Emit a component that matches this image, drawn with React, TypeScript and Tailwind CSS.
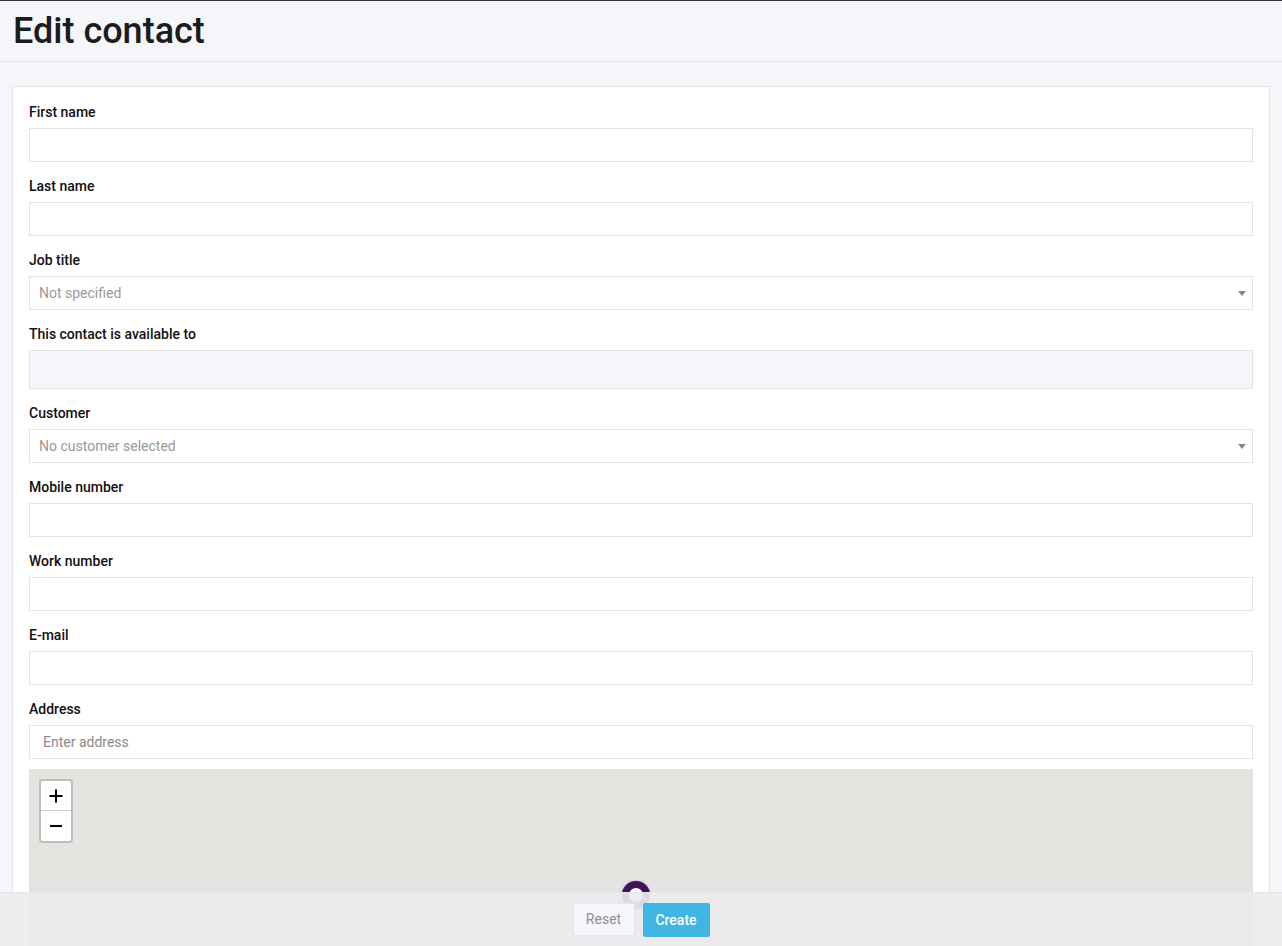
import React from "react";

function Label({ children }: { children: React.ReactNode }) {
  return <div className="mb-[7px] h-[18px] text-[14px] leading-[18px] font-medium text-[#111111]">{children}</div>;
}

function TextField({ label }: { label: string }) {
  return (
    <div className="mb-[15px]">
      <Label>{label}</Label>
      <input type="text" className="block h-[34px] w-full border border-[#e3e3e3] bg-white outline-none" />
    </div>
  );
}

function SelectField({ label, value }: { label: string; value: string }) {
  return (
    <div className="mb-[15px]">
      <Label>{label}</Label>
      <div className="flex h-[34px] w-full items-center justify-between border border-[#e3e3e3] bg-white pl-[9px] pr-[6px]">
        <span className="text-[14px] text-[#999999]">{value}</span>
        <span className="h-0 w-0 border-x-[4px] border-t-[5px] border-x-transparent border-t-[#888888]" />
      </div>
    </div>
  );
}

export default function App() {
  return (
    <div className="relative h-[946px] overflow-hidden border-t border-[#333333] bg-[#f5f6fa] font-['Roboto',sans-serif]">
      <header className="flex h-[61px] items-center border-b border-[#e3e4e8] pl-[13px]">
        <h1 className="text-[36px] leading-[40px] font-medium text-[#1c1c1c]">Edit contact</h1>
      </header>
      <main className="mx-[12px] mt-[24px] h-[900px] border border-[#e3e4e8] bg-white px-[16px] pt-[16px]">
        <TextField label="First name" />
        <TextField label="Last name" />
        <SelectField label="Job title" value="Not specified" />
        <div className="mb-[15px]">
          <Label>This contact is available to</Label>
          <div className="h-[39px] w-full border border-[#e3e3e3] bg-[#f5f6fa]" />
        </div>
        <SelectField label="Customer" value="No customer selected" />
        <TextField label="Mobile number" />
        <TextField label="Work number" />
        <TextField label="E-mail" />
        <div>
          <Label>Address</Label>
          <input
            type="text"
            placeholder="Enter address"
            className="block h-[34px] w-full border border-[#e3e3e3] bg-white px-[13px] text-[14px] outline-none placeholder:text-[#8a8a8a]"
          />
        </div>
        <div className="relative mt-[10px] h-[400px] overflow-hidden bg-[#e5e3df]">
          <div className="absolute left-[10px] top-[10px] w-[34px] overflow-hidden rounded-[4px] border-2 border-[#bdbdbb] bg-white">
            <div className="flex h-[30px] items-center justify-center border-b border-[#cccccc]">
              <svg width="14" height="14" viewBox="0 0 14 14"><path d="M0.5 7H13.5M7 0.5V13.5" stroke="#000" strokeWidth="2" fill="none" /></svg>
            </div>
            <div className="flex h-[30px] items-center justify-center">
              <svg width="14" height="14" viewBox="0 0 14 14"><path d="M1 7H13" stroke="#000" strokeWidth="2" fill="none" /></svg>
            </div>
          </div>
          <div className="absolute left-[593px] top-[112px] h-[28px] w-[28px] rounded-full border-[7px] border-[#3f1458] bg-white shadow-[0_0_0_1px_rgba(63,20,88,0.15)]" />
        </div>
      </main>
      <footer className="absolute inset-x-0 bottom-0 flex h-[54px] items-start justify-center gap-[8px] border-t border-[#e6e6e9] bg-[rgba(235,235,238,0.92)] pt-[10px]">
        <button className="mt-[0px] h-[33px] w-[62px] rounded-[2px] border border-[#e6e6e9] bg-[#f5f6fa] text-[14px] text-[#8f8f8f]">Reset</button>
        <button className="h-[34px] w-[67px] rounded-[2px] bg-[#41b5e4] text-[14px] font-medium text-white">Create</button>
      </footer>
    </div>
  );
}
